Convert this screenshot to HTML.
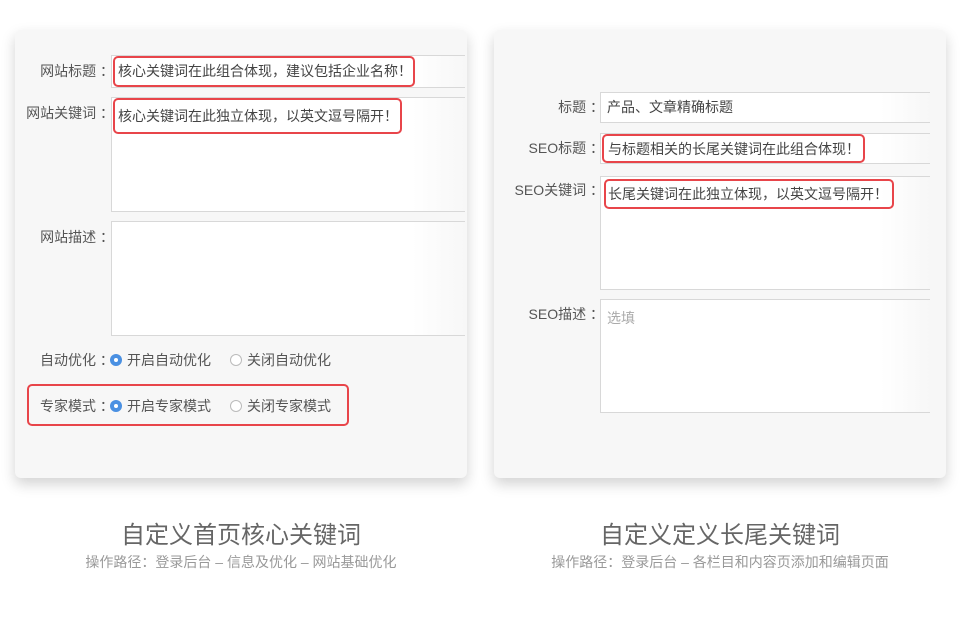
<!DOCTYPE html><html><head><meta charset="utf-8"><style>
body{margin:0;width:960px;height:640px;background:#fff;position:relative;font-family:"Liberation Sans","Noto Sans CJK SC",sans-serif;overflow:hidden}
.card{position:absolute;top:30px;width:452px;height:448px;background:#f7f7f7;border-radius:6px;box-shadow:0 6px 14px rgba(0,0,0,.18)}
.lab{position:absolute;font-size:14px;color:#555;text-align:right;width:100px;line-height:20px}
.in{position:absolute;background:linear-gradient(90deg,#fff 85%,#f7f7f7);border:1px solid #d8d8d8;border-right:none;box-sizing:border-box}
.txt{position:absolute;font-size:14px;color:#444;line-height:20px;white-space:nowrap}
.red{position:absolute;border:2px solid #e8454a;border-radius:5px;box-sizing:border-box}
.r{position:absolute;width:12px;height:12px;border-radius:50%;box-sizing:border-box}
.on{background:#4a90e2;border:none}.on:after{content:"";position:absolute;left:4px;top:4px;width:4px;height:4px;border-radius:50%;background:#fff}
.off{border:1px solid #bbb;background:#fff}
.t1{position:absolute;width:480px;text-align:center;font-size:24px;color:#666;top:515px}
.t2{position:absolute;width:480px;text-align:center;font-size:14px;color:#999;top:552px}
</style></head><body>
<div class="card" style="left:15px"></div>
<div class="card" style="left:494px"></div>

<div class="lab" style="left:14px;top:61px">网站标题 ：</div>
<div class="in" style="left:111px;top:55px;width:354px;height:33px"></div>
<div class="red" style="left:113px;top:56px;width:302px;height:31px"></div>
<div class="txt" style="left:118px;top:61px">核心关键词在此组合体现，建议包括企业名称！</div>

<div class="lab" style="left:14px;top:103px">网站关键词 ：</div>
<div class="in" style="left:111px;top:97px;width:354px;height:115px"></div>
<div class="red" style="left:113px;top:98px;width:289px;height:36px"></div>
<div class="txt" style="left:118px;top:106px">核心关键词在此独立体现，以英文逗号隔开！</div>

<div class="lab" style="left:14px;top:227px">网站描述 ：</div>
<div class="in" style="left:111px;top:221px;width:354px;height:115px"></div>

<div class="txt" style="left:40px;top:350px;color:#555">自动优化 ：</div>
<div class="r on" style="left:110px;top:354px"></div>
<div class="txt" style="left:127px;top:350px;color:#555">开启自动优化</div>
<div class="r off" style="left:230px;top:354px"></div>
<div class="txt" style="left:247px;top:350px;color:#555">关闭自动优化</div>

<div class="red" style="left:27px;top:384px;width:322px;height:42px"></div>
<div class="txt" style="left:40px;top:396px;color:#555">专家模式 ：</div>
<div class="r on" style="left:110px;top:400px"></div>
<div class="txt" style="left:127px;top:396px;color:#555">开启专家模式</div>
<div class="r off" style="left:230px;top:400px"></div>
<div class="txt" style="left:247px;top:396px;color:#555">关闭专家模式</div>

<div class="lab" style="left:504px;top:97px">标题 ：</div>
<div class="in" style="left:600px;top:92px;width:330px;height:31px"></div>
<div class="txt" style="left:607px;top:97px">产品、文章精确标题</div>

<div class="lab" style="left:504px;top:138px">SEO标题 ：</div>
<div class="in" style="left:600px;top:133px;width:330px;height:31px"></div>
<div class="red" style="left:602px;top:134px;width:263px;height:29px"></div>
<div class="txt" style="left:608px;top:139px">与标题相关的长尾关键词在此组合体现！</div>

<div class="lab" style="left:504px;top:180px">SEO关键词 ：</div>
<div class="in" style="left:600px;top:176px;width:330px;height:114px"></div>
<div class="red" style="left:604px;top:179px;width:290px;height:30px"></div>
<div class="txt" style="left:608px;top:184px">长尾关键词在此独立体现，以英文逗号隔开！</div>

<div class="lab" style="left:504px;top:304px">SEO描述 ：</div>
<div class="in" style="left:600px;top:299px;width:330px;height:114px"></div>
<div class="txt" style="left:607px;top:308px;color:#aaa">选填</div>

<div class="t1" style="left:1px">自定义首页核心关键词</div>
<div class="t2" style="left:1px">操作路径：登录后台 – 信息及优化 – 网站基础优化</div>
<div class="t1" style="left:480px">自定义定义长尾关键词</div>
<div class="t2" style="left:480px">操作路径：登录后台 – 各栏目和内容页添加和编辑页面</div>
</body></html>
